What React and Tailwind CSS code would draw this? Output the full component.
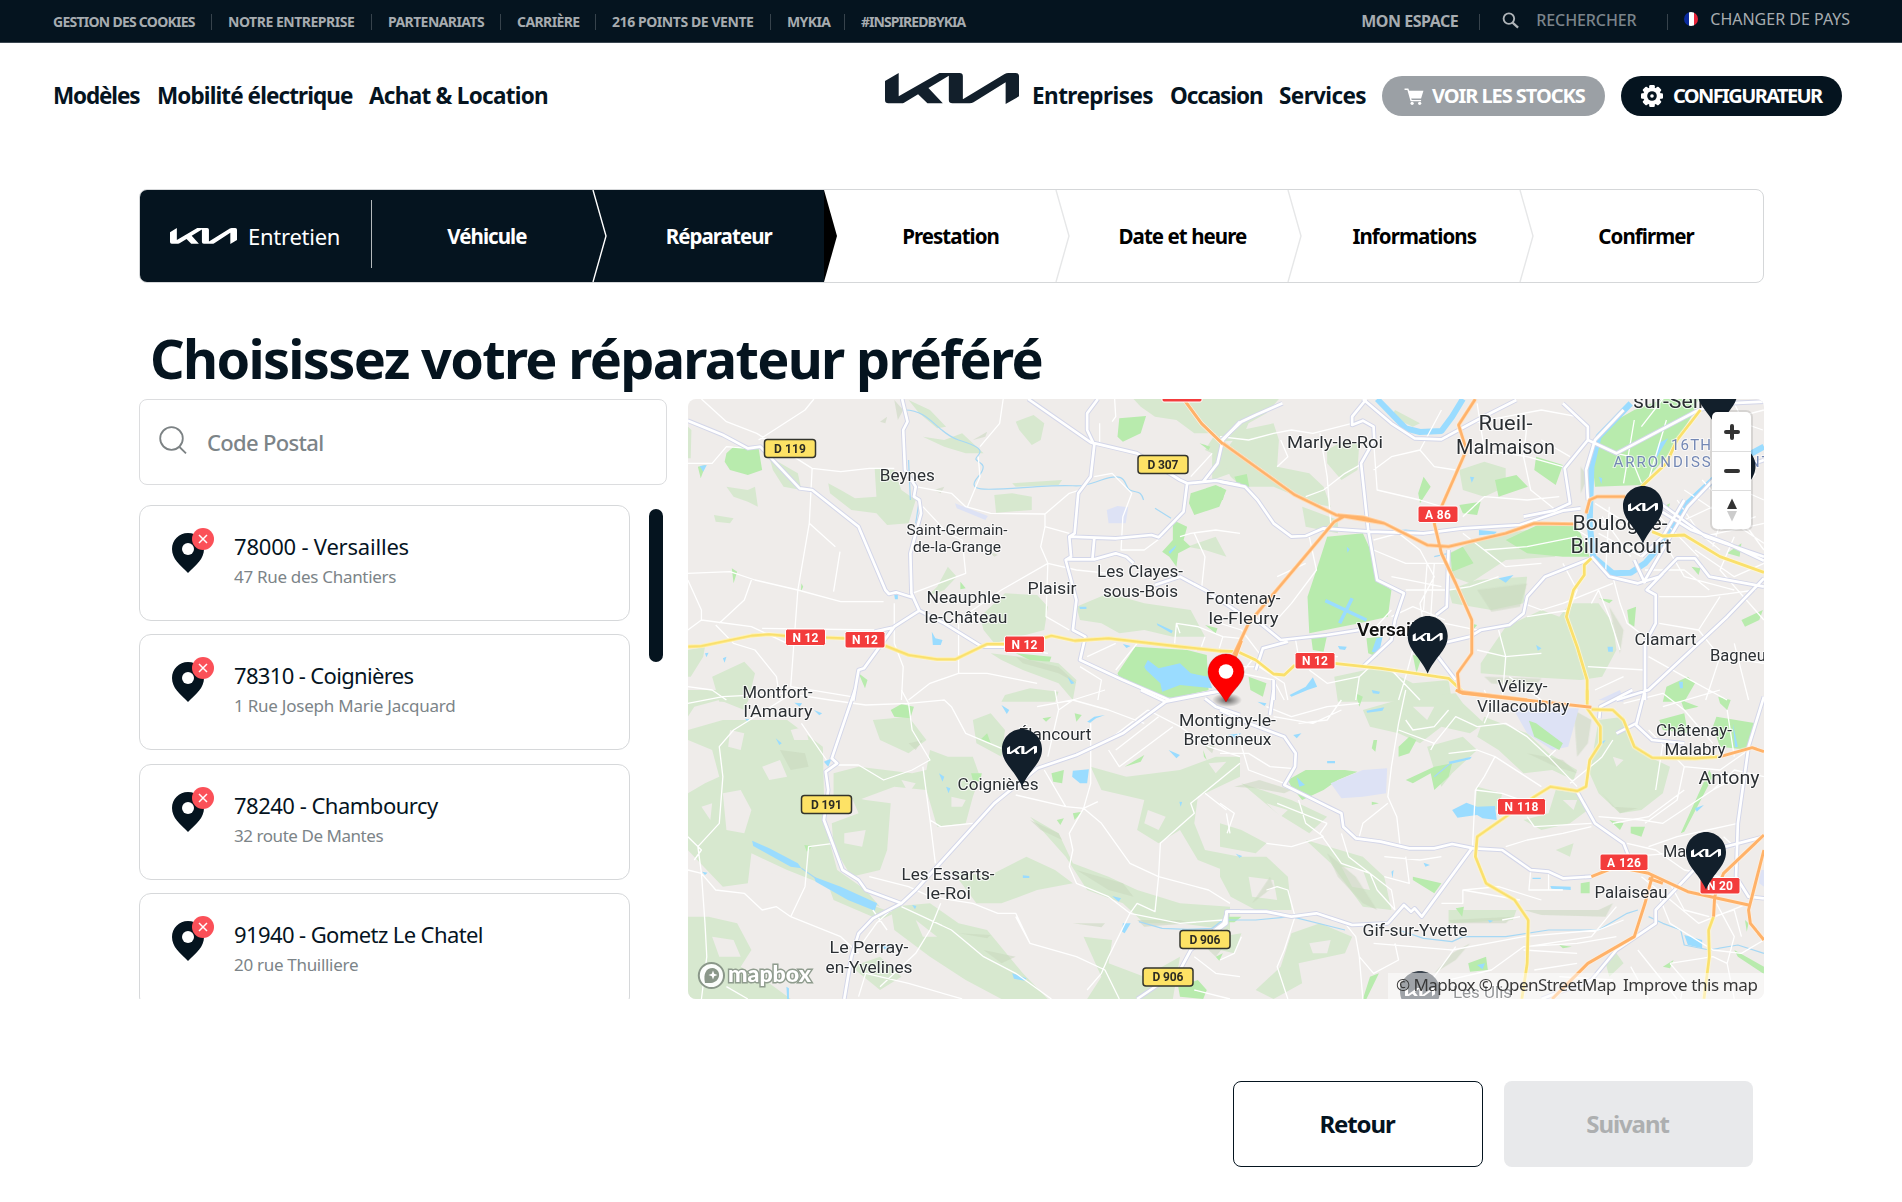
import React from 'react';

const KIA_PATH =
  'M27 57L68 33V103L190 33H250Q260 33 260 43V112L385 36Q390 33 396 33H418Q428 33 428 43V103L388 126V61L292 121Q287 124 280 124H229Q218 124 218 114V41L157 78L200 124H154L126 97L84 122Q81 124 76 124H37Q27 124 27 114Z';

function KiaLogo({ className }) {
  return (
    <svg viewBox="27 33 401 93" preserveAspectRatio="none" className={className} fill="currentColor">
      <path d={KIA_PATH} />
    </svg>
  );
}

const TOP_LINKS = [
  ['GESTION DES COOKIES', 'w-[142px] tracking-[-0.74px]'],
  ['NOTRE ENTREPRISE', 'w-[127px] tracking-[-0.48px]'],
  ['PARTENARIATS', 'w-[96px] tracking-[-0.58px]'],
  ['CARRIÈRE', 'w-[62px] tracking-[-0.6px]'],
  ['216 POINTS DE VENTE', 'w-[142px] tracking-[-0.43px]'],
  ['MYKIA', 'w-[41px] tracking-[-0.6px]'],
  ['#INSPIREDBYKIA', 'w-[104px] tracking-[-0.94px]'],
];

function TopBar() {
  return (
    <div className="flex h-[43px] items-start border-b border-[#3a4650] bg-[#05141f] pl-[53px] pr-[52px] text-[#a7acb0]">
      <div className="flex h-[43px] items-center text-[14px] font-bold">
        {TOP_LINKS.map(([t, c], i) => (
          <React.Fragment key={t}>
            {i > 0 && <span className="mx-4 h-4 w-px bg-[#37434c]" />}
            <span className={`whitespace-nowrap ${c}`}>{t}</span>
          </React.Fragment>
        ))}
      </div>
      <div className="ml-auto flex h-[43px] items-center text-[16px]">
        <span className="-mt-0.5 w-[98px] whitespace-nowrap font-bold tracking-[-0.48px]">MON ESPACE</span>
        <span className="ml-5 mr-[22px] h-4 w-px bg-[#37434c]" />
        <svg viewBox="0 0 18 18" className="-mt-0.5 h-[17px] w-[17px]" fill="none" stroke="#b0b5b9" strokeWidth="2">
          <circle cx="7.3" cy="7" r="5.6" />
          <path d="M11.2 11.2L17 16.6" strokeWidth="2.4" />
        </svg>
        <span className="ml-[17px] -mt-1 w-[102px] whitespace-nowrap font-medium tracking-[-0.1px] text-[#7b848b]">RECHERCHER</span>
        <span className="ml-[29px] mr-4 h-4 w-px bg-[#37434c]" />
        <span className="-mt-1.5 flex h-[14px] w-[14px] overflow-hidden rounded-full">
          <i className="flex-1 bg-[#0a2a9c]" />
          <i className="flex-1 bg-white" />
          <i className="flex-1 bg-[#e8243a]" />
        </span>
        <span className="-mt-1.5 ml-3 whitespace-nowrap">CHANGER DE PAYS</span>
      </div>
    </div>
  );
}

function NavBar() {
  return (
    <nav className="flex h-[106px] items-center whitespace-nowrap pl-[53px] pr-[60px] text-[22.5px] font-bold text-[#05141f]">
      <span className="w-[88px] tracking-[-1.15px]">Modèles</span>
      <span className="ml-4 w-[196px] tracking-[-0.9px]">Mobilité électrique</span>
      <span className="ml-4 w-[180px] tracking-[-0.72px]">Achat &amp; Location</span>
      <KiaLogo className="-mt-4 ml-auto h-[31px] w-[134px] text-[#121f2b]" />
      <span className="ml-[13px] w-[122px] tracking-[-0.55px]">Entreprises</span>
      <span className="ml-4 w-[93px] tracking-[-1.1px]">Occasion</span>
      <span className="ml-4 w-[87px] tracking-[-0.6px]">Services</span>
      <span className="ml-4 flex h-10 w-[223px] items-center rounded-full bg-[#9ba0a5] pl-[22px] text-[20px] font-bold text-white">
        <svg viewBox="0 0 20 18" className="mr-2 h-[17px] w-[20px]" fill="#fff">
          <path d="M0 0.5H4L5 3H20L17.5 11H7L7.6 12.6H17.5V14H6.4L3 2H0Z" />
          <circle cx="8" cy="16.2" r="1.7" />
          <circle cx="16" cy="16.2" r="1.7" />
        </svg>
        <span className="tracking-[-1.05px]">VOIR LES STOCKS</span>
      </span>
      <span className="ml-4 flex h-10 w-[221px] items-center rounded-full bg-[#05141f] pl-[20px] text-[20px] font-bold text-white">
        <svg viewBox="-11 -11 22 22" className="mr-[10px] h-[22px] w-[22px]" fill="#fff">
          {[0, 45, 90, 135].map((a) => (
            <rect key={a} x="-2.8" y="-11" width="5.6" height="22" rx="1.2" transform={`rotate(${a})`} />
          ))}
          <circle r="8.8" />
          <circle r="4.8" fill="#05141f" />
          <circle r="1.8" fill="#fff" />
        </svg>
        <span className="tracking-[-1.6px]">CONFIGURATEUR</span>
      </span>
    </nav>
  );
}

const STEPS = ['Véhicule', 'Réparateur', 'Prestation', 'Date et heure', 'Informations', 'Confirmer'];

function Stepper() {
  return (
    <div className="mt-10 ml-[139px] flex h-[94px] w-[1625px] overflow-hidden rounded-lg border border-[#d5d7d9]">
      <div className="flex w-[232px] items-center bg-[#05141f] pl-[30px] text-white">
        <KiaLogo className="h-4 w-[67px]" />
        <span className="ml-[11px] w-[94px] text-[22px] tracking-[-0.25px]">Entretien</span>
        <span className="-mt-[5px] ml-auto h-[68px] w-px bg-[#b4b9bc]" />
      </div>
      {STEPS.map((s, i) => (
        <div
          key={s}
          className={`relative flex flex-1 items-center justify-center text-[20.5px] font-bold tracking-[-0.95px] ${
            i === 0 ? 'bg-[#05141f] text-white' : i === 1 ? 'text-white' : 'text-black'
          }`}
        >
          {i === 1 && <span className="absolute inset-y-0 left-0 w-[220px] bg-[#05141f]" />}
          <span className="relative pr-0.5">{s}</span>
          {i < 5 && (
            <svg viewBox="0 0 16 92" className="absolute -right-[4px] top-0 z-10 h-[92px] w-4">
              {i === 1 ? (
                <path d="M0 0L13 46L0 92Z" fill="#000" />
              ) : (
                <path d="M1 0L14 46L1 92" fill="none" stroke={i === 0 ? '#fff' : '#e6e7e8'} strokeWidth="1.4" />
              )}
            </svg>
          )}
        </div>
      ))}
    </div>
  );
}

const DEALERS = [
  ['78000 - Versailles', '47 Rue des Chantiers', 'tracking-[-0.2px]', 'tracking-[-0.3px]'],
  ['78310 - Coignières', '1 Rue Joseph Marie Jacquard', 'tracking-[-0.65px]', 'tracking-[-0.23px]'],
  ['78240 - Chambourcy', '32 route De Mantes', 'tracking-[-0.5px]', 'tracking-[-0.45px]'],
  ['91940 - Gometz Le Chatel', '20 rue Thuilliere', 'tracking-[-0.6px]', 'tracking-[-0.3px]'],
];

function DealerCard({ name, street, track, streetTrack }) {
  return (
    <div className="flex h-[116px] w-[491px] shrink-0 rounded-xl border border-[#d6d8da] pl-8">
      <svg viewBox="0 0 44 46" className="mt-[21px] h-[46px] w-11 shrink-0">
        <path d="M16 6C7 6 0 13 0 22C0 32 8 38 16 46C24 38 32 32 32 22C32 13 25 6 16 6Z" fill="#05141f" />
        <circle cx="16" cy="22" r="6" fill="#fff" />
        <circle cx="31" cy="12" r="11" fill="#fb5058" />
        <path d="M27 8L35 16M35 8L27 16" stroke="#fff" strokeWidth="1.5" />
      </svg>
      <div className="ml-[18px] mt-[25px] whitespace-nowrap">
        <div className={`text-[22px] leading-[30px] text-[#05141f] ${track}`}>{name}</div>
        <div className={`mt-1 text-[17px] leading-6 text-[#7c8488] ${streetTrack}`}>{street}</div>
      </div>
    </div>
  );
}

/* The map is drawn in four quarters, each with its own local coordinates. */
const QUARTERS = [
  {
    origin: 'translate(680 390)',
    forest:
      'M1270 27H1568V110L1520 160L1490 190L1470 180L1500 130L1440 130L1390 90L1330 80L1290 50Z M1490 190L1520 150L1568 190V240L1490 270Z M545 235L600 240L620 300L660 330L640 400L580 405L550 370L480 360L420 310L415 280L450 300L490 325L550 320Z M130 290L190 300L210 290L218 350L190 335L150 320Z M250 200L330 250L340 300L290 290L260 240Z M880 315L930 310L985 320V360L885 368Z M940 95L990 75L1020 100L1010 150L985 165L950 120Z M680 140L740 150L790 130L850 190L800 190L740 170Z M640 30L700 60L745 110L720 115L670 70Z M95 375L150 385L140 400L100 395Z M840 680L910 610L1000 615L1030 650L1020 720L880 760L850 720Z M1110 650L1200 610L1300 640L1430 660L1470 740L1380 740L1300 720L1230 730L1180 700L1120 690Z M90 860L180 815L210 850L190 935H110Z M22 780L70 770L65 800L30 860H22Z M870 790L950 800L1060 820L1110 870L1100 930L1060 880L960 840L900 810Z M910 915L980 895L1060 905L1050 935H900Z M22 110L32 120L30 205L22 205Z M930 280L1070 270L1060 285L940 290Z M1420 470L1500 440L1530 500L1470 480Z M720 590L750 530L775 560L740 600L690 620Z',
    shade:
      'M560 95L580 80L575 100Z M600 30L625 60L610 90Z M710 300L740 290L730 310Z M820 150L860 125L855 140Z M860 480L890 495L880 500Z M940 800L1060 830L1110 880L1060 850L960 820Z',
    park: 'M130 190L150 170L220 175L230 240L190 255L140 240L125 215Z M1230 85L1305 78L1290 130L1240 155L1225 140Z M1430 310L1500 285L1530 300L1510 350L1440 375L1425 340Z M1225 850L1275 770L1420 780L1475 795L1480 900L1380 925L1320 910L1230 865Z M1380 390L1420 410L1410 450L1430 470L1395 490L1390 530L1370 500L1350 485L1380 450Z M145 535L160 545L150 580Z M940 790L1040 800L1035 815L980 810Z M50 230L72 225L58 265Z M340 580L338 605L345 590Z M500 850L525 870L518 895Z M785 575L800 595L785 598Z M1470 705L1505 715L1500 730Z M1455 160L1485 170L1480 180Z',
    water:
      'M1300 830L1310 810L1340 835L1400 820L1430 850L1480 860L1490 895L1400 885L1350 905L1345 880L1305 840Z M705 725L715 745L735 750L730 765L708 765Z M600 615H610V628H602Z M1118 650H1138V657H1120Z M55 228L75 225L65 245Z M70 790L80 788L74 802Z M120 805L130 800L125 818Z M1240 762L1262 768L1250 774Z M1368 485L1390 465L1386 475L1372 492Z M1335 700L1380 722L1376 730L1337 706Z M1085 860L1105 880L1095 882Z',
    urban: 'M1195 360L1225 348L1255 352L1248 400L1200 400Z M770 340L862 378L855 390L775 355Z',
    stream:
      'M630 60C700 60 720 130 780 150S850 180 832 200S875 210 835 260S860 300 1000 290S1100 300 1180 270S1240 290 1260 300S1290 300 1298 330 M1330 355L1375 385 M640 210L645 330 M670 330L660 400',
    minor:
      'M60 27L130 95L215 130L370 235L450 245L530 235L600 235 M375 27L350 60L220 150 M370 235L362 400L330 600L310 890 M362 400L435 470 M448 485L430 605 M22 550L140 545L210 570L330 600L450 635L570 635 M905 27L895 100L840 170 M835 200L840 260L805 350 M660 290L760 310L800 350L870 370L1022 372V410L1010 470L1030 520L1110 540L1200 550 M1022 410L1090 430 M1030 520L1025 680L1090 720 M1022 372L1090 310L1120 300 M22 220L90 220L130 170L190 175 M1217 27L1220 80L1210 95 M1175 100V160 M680 350L750 430L790 450L800 550L700 590L650 610 M1160 260L1210 250L1265 310L1240 380L1235 480H1300L1350 440 M1400 440L1430 430L1500 420L1568 430 M60 690L200 710L300 760 M22 570L60 660V690L22 720 M100 705L150 760L210 780L270 860L280 930 M200 570L180 630L110 700 M600 640V760L625 830L620 930 M780 700V850L700 880L640 930 M780 850H860L1000 880 M1030 790L980 780 M310 890L480 920 M1220 840L1280 760 M1120 830L1180 870L1170 930 M1400 730L1390 700L1450 710L1520 740L1568 745 M1440 430L1470 500L1460 600 M1140 800L1220 760 M22 890L90 900L130 930 M230 715L560 720 M1030 520L900 600L780 690 M1430 260L1490 190 M1390 700L1385 760 M1470 740L1460 770 M1520 740L1510 775',
    main: 'M22 92L120 135L190 175L225 170L335 295L370 300L500 410L575 600L585 612L605 607L650 622 M622 27L637 95L625 120L630 240L660 290L655 320L670 330L675 370L645 490L648 610L670 662L600 710L515 835L500 840L485 932 M545 725L600 712 M670 662L740 700L845 770H920 M975 27L1150 157L1280 190L1400 270L1420 280L1500 272L1568 285 M1170 27L1140 70V120L1160 165L1150 260L1115 310L1105 430L1090 440L1095 500L1080 510L1110 630L1100 720L1135 740L1120 810L1240 870L1370 930L1500 905 M1090 440L1220 445L1320 435L1340 442L1410 365L1420 280 M1085 508H1160L1220 490L1250 500L1270 520 M1160 445L1155 505 M1568 95L1520 150L1505 220L1465 275 M1330 585L1400 560L1470 600L1568 670',
    yellow:
      'M22 770L60 768L200 737L250 733L300 738L460 745L570 765L640 795L720 808L770 808L860 762L960 762L1040 737L1105 752L1200 745L1400 770L1514 783',
    orange: 'M1410 27L1460 100L1520 162 M1572 752L1545 830',
  },
  {
    origin: 'translate(1220 390)',
    forest:
      'M0 27H165L130 70L80 100L60 150L0 155Z M0 200L60 120L150 100L165 150L160 230L250 250L290 290L310 350L260 340L150 290L60 290L30 260Z M300 180L350 150L390 160L385 240L340 270L300 220Z M670 240L740 215L800 235V290L740 320L680 300Z M640 600L720 570L860 560L850 640L760 660L650 640Z M730 820L800 710L900 660L950 680L980 640L1060 640L1100 700L1110 780L1070 860L1010 870L850 860L730 850Z M320 860L450 830L540 880L640 870L650 935H330Z M640 490L740 440L860 420L940 500L800 510L700 580L650 560Z M230 350L330 390L330 430L240 410Z M490 60L560 100L540 110L480 80Z',
    shade:
      'M720 600L860 580L840 650L760 665Z M1010 310L1030 260L1010 230Z M740 860L900 865L880 890L760 880Z M1090 650L1130 720L1120 790Z',
    park: 'M300 440L400 430L430 500L440 570L480 600L470 680L390 700L250 730L245 620L270 540Z M1060 150L1110 90L1160 60L1240 27H1340L1320 80L1250 200L1180 285L1050 290L1045 240Z M800 450L900 400L1000 405L1035 500L960 500L860 490Z M885 200L960 225L940 285L880 240Z M555 310L570 260L590 290L560 340Z M770 270L830 255L862 290L780 320Z M670 345L730 335L720 375L680 370Z M40 260L75 252L82 290L50 285Z M645 490L680 470L710 520L650 545Z M1460 690L1520 660L1510 690L1470 710Z M255 740L300 735L290 785L260 780Z M0 290L15 300L8 330L0 330Z M1140 660L1165 650L1160 710L1145 700Z M1250 890L1310 860L1330 880L1300 935H1240Z M1060 625L1100 630L1090 640Z M1240 350L1260 340L1255 360Z M410 745L450 740L440 800L415 790Z M1420 490L1460 460L1455 500Z M80 860L130 880L120 920L85 900Z M540 795L565 800L550 850Z M700 700L720 705L700 730Z M1320 530L1345 535L1340 555Z',
    water:
      'M195 915L240 890L260 862L272 890L245 900L200 920Z M780 565L822 555L800 578Z M725 420L775 425L770 432L725 436Z M438 745L455 742L445 790L425 785Z M425 900L448 905L445 912L428 910Z M1085 770H1100V785H1087Z M700 260L712 262L705 278Z M1220 190L1228 160L1255 145L1235 180L1222 205Z M330 768L355 770L350 780L335 778Z M355 470L363 478L357 488Z M885 765L900 775L890 782Z M1060 260L1070 265L1068 282Z M1285 875H1296V895H1288Z',
    urban: 'M1060 930L1120 900L1130 935Z',
    river: 'M440 27L520 115L560 126L620 123L650 80L680 27 M1150 40L1060 140L1040 230L1035 400L1045 500L1100 550L1150 548L1190 520L1230 470L1290 360L1380 270L1480 195L1523 170',
    stream: 'M410 430L520 420L560 425 M640 490L600 500',
    canal: 'M295 632L410 690 M335 700L370 625',
    minor:
      'M0 140L80 150L150 130L200 120L260 130L370 100 M170 150L190 200L160 230 M280 130L300 260L310 400 M400 220L350 250L290 300L240 320 M620 60L560 180L480 200L430 240 M560 180L600 230L660 240 M430 150L440 300L560 330L620 350 M720 40L740 180 M700 100L800 80L900 60L1000 80 M740 180L860 200L960 230 M860 100L850 200L870 300L940 360 M680 380L740 320L860 330L950 320 M430 450L500 430L560 480L600 560L560 640L570 700 M430 480L520 520L640 520 M480 560L620 590 M520 600H630 M580 520L570 660 M600 520L590 680 M640 600L700 590L780 560 M680 430L740 480L860 470L1000 440 M740 480L800 530L900 520 M630 700L720 720 M250 440L270 540L200 640L150 700 M160 560L240 520 M420 730L480 660 M480 680L540 650L630 690 M210 740L220 800L330 800 M0 700L60 720L110 790 M50 830L110 830L180 880L190 930 M250 840L300 880L390 860L420 830 M390 860L380 930 M540 780L520 860L500 930 M480 840L560 930 M0 870L60 850L150 870L180 930 M60 850L90 810 M900 150L980 200 M1060 400L1200 410 M1060 430L1180 500 M1070 380L1150 500 M1050 340L1140 400 M1090 350L1080 540 M1250 350L1400 480 M1230 380L1340 500 M1280 330L1350 440L1523 400 M1300 300L1523 460 M1400 230L1420 330L1523 480 M1350 270L1480 420 M1420 330L1280 400 M1500 250L1400 400L1380 470 M1460 300L1523 330 M1400 420L1500 380 M1440 440L1400 540L1523 690 M1330 480L1440 560L1523 520 M1240 450L1300 560L1440 600 M1160 90L1130 280 M1110 190L1150 200L1180 280 M1240 27L1180 110 M1250 90L1200 270 M1360 60L1520 120 M1380 100L1523 60 M1440 40L1480 130 M960 520L1000 600L970 680 M1060 600L1090 680L1120 780 M1060 600L1040 640 M1120 640L1140 700L1190 740 M1100 560L1120 640 M1230 620L1360 620L1500 600 M1230 700L1340 720L1400 800L1523 820 M1340 720L1400 620 M1200 800L1300 860L1420 930 M1400 800L1360 930 M1440 760L1480 930 M1030 830L1190 840 M1050 900L1130 860 M860 680L980 660 M780 720L800 800L790 930 M720 780L800 800L900 790 M810 860L900 930 M1190 540L1300 540L1370 600 M1000 420L1030 440 M850 640L900 660L960 640L1100 580',
    main: 'M0 275L70 290L105 330L150 400L200 440L240 438L290 415L420 425L570 430L680 415L840 405L960 362L1010 355 M175 40L100 75L60 95L0 155 M410 27L370 80V105L400 92L430 110L432 150L395 220L415 420L440 570L515 610L490 690L480 750L400 830 M400 27L480 100L545 145L620 148L720 90L830 30 M640 480L635 650L605 675 M90 680L170 750L300 735L390 720 M100 840L120 775L190 755 M960 40L1030 110V150L965 235L980 340L935 362L850 380 M1030 150L1110 190L1340 60L1420 40L1523 35 M1040 505L910 560L860 620L850 670L810 705L730 720L700 740L600 765 M1040 500L1090 560L1170 580L1230 560L1280 505H1330L1370 560L1523 590 M1130 60L1050 150L1025 240L1030 330 M1200 340L1320 420L1420 460L1523 512 M1220 330L1360 440L1523 500 M1190 570L1310 350L1390 260L1523 210 M1523 565L1420 680L1200 900L1110 930 M1240 550L1195 600L1220 615V700L1190 760V930 M610 800L660 870 M150 870V930 M1160 510L1190 580 M1180 500L1240 440L1300 330',
    orange:
      'M8 160L210 315L325 375L460 400L580 465L640 470L800 430L880 400L1000 402 M715 27L668 105L690 180L620 350L600 400L620 490L660 580L705 690V790L665 850L670 905L860 930 M350 378L320 395L80 700L38 795 M1025 370L1035 330L1055 320H1135 M330 375L400 382L460 400',
    yellow:
      'M0 783L50 785L100 810L150 852L180 855L210 825 M320 820L450 835L640 865L680 905 M1345 60L1280 150L1250 220L1180 290 M1210 425L1240 438L1300 435L1400 500L1523 547 M1040 505L1020 525V555L990 600L970 680L1000 770L1028 870V930',
  },
  {
    origin: 'translate(680 690)',
    forest:
      'M120 90L300 90L400 170L405 400L440 540L520 600L560 650L300 540L200 490L190 580L120 590L22 480V310L70 280L110 260L90 180L22 150V120Z M430 470L425 400L500 370L480 320L520 330L590 340L580 480L560 540L480 560Z M430 250L500 230L650 250L690 240L700 180L750 200L820 200L840 260L820 320L800 400L720 410L690 300L600 290L500 330L430 320Z M540 90L640 80L690 150L640 190L560 150Z M820 90L870 70L910 120L900 200L830 160Z M22 680L80 680L160 700L200 780L170 830L250 880L310 927H22Z M590 650L700 640L780 700L860 720L960 850L1030 927H900L800 870L700 800L600 720Z M760 540L860 560L970 500L1050 540L1100 580L1000 600L900 640L830 640Z M980 380L1060 430L1100 520L1200 560L1280 600L1400 640L1540 650V720L1400 700H1300L1240 640L1140 600L1080 500Z M1150 230L1250 260L1400 240L1500 200H1568V260L1450 320L1440 400L1470 480L1568 500V560L1450 510L1400 420L1340 460L1280 420L1300 330L1180 300Z M1130 740L1210 750L1200 820L1300 860L1400 800L1380 927H1140L1180 860Z M22 0H200L180 60L110 30L40 50L22 80Z M420 600L600 670L560 690L430 630Z M480 830L560 800L620 860L560 900Z',
    land: 'M230 230L280 210L300 260L250 270Z M120 310L170 300L200 360L180 430L130 420Z M210 540L340 570L380 620L300 680L200 620Z M310 120L350 110L360 150L320 150Z M140 120L180 130L170 180L135 170Z M460 430L520 420L510 470L460 460Z M90 740L150 750L170 800L110 800Z M760 320L800 330L790 350L760 350Z M620 270L660 280L640 310Z M1310 360L1360 380L1340 420L1300 400Z M1480 220L1530 215L1500 250Z M30 550L90 580L60 640L22 620Z M60 350L90 340L85 390Z M660 690L720 740L680 740Z M1220 770L1260 790L1230 810Z',
    shade:
      'M280 180L350 190L360 230L310 240Z M1110 540L1240 580L1270 620L1200 600Z M780 730L870 735L860 745Z M1280 690L1400 690L1430 700L1300 710Z M850 780L940 800L900 820Z M640 160L680 150L660 180Z M980 390L1060 430L1070 450L1010 420Z M1100 700L1190 700L1180 712Z M1470 170L1500 160L1490 190Z M1480 750L1530 760L1500 800L1480 780Z',
    park: 'M590 60L620 42L655 50L645 85L600 80Z M1290 0H1480L1370 22L1340 22Z M1040 250L1075 240L1070 280L1045 275Z M1245 230L1300 195L1290 215Z M1395 890L1450 870L1475 900L1465 927L1400 920Z M348 465L372 468L355 485Z M815 250L845 250L840 275L820 270Z M840 150L860 130L870 160Z M1100 370L1125 365L1105 390Z M1055 390L1075 385L1065 405Z M1015 85L1040 80L1025 95Z M1105 70L1125 75L1110 95Z M1465 180L1475 210L1467 200Z M1500 800L1520 790L1510 812Z',
    water:
      'M202 452L250 475L330 520L340 535L310 530L205 468Z M375 560L450 590L552 640L545 662L470 630L380 575Z M1100 242L1145 238L1140 280L1120 280L1098 260Z M1368 180L1400 195L1390 205Z M725 250L740 260L735 275Z M745 290L757 295L752 310Z M900 45L922 60L915 72Z M1240 700L1262 700L1245 730L1238 725Z M930 850L970 865L965 872L935 866Z M375 60L398 70L390 76Z M268 145L285 160L278 165Z M403 215L425 205L415 230Z M1210 618L1235 625L1228 635Z M650 645L662 648L658 658Z M62 545L77 548L70 555Z M298 890L305 895V927H300Z M960 556L978 558V564H960Z M320 38L342 40L335 50Z M1140 95L1160 80L1190 75L1165 85L1148 98Z M182 86L194 88L190 96Z M555 770L590 765L580 780Z M1555 490L1568 500V505Z M1398 335L1406 336L1402 350Z',
    urban: '',
    stream: 'M1285 695L1350 715L1420 718L1490 715L1520 690 M340 535L380 565',
    minor:
      'M22 40L120 20L300 10L420 30L520 45L640 40L740 30L760 50 M640 40L650 120L700 210L650 240L570 270L500 225H430 M680 230L700 390L715 520 M700 390L730 410L820 400 M760 50L800 130L900 175 M300 20L240 60L150 120L110 170L120 260L110 400L50 470L60 550L70 700L75 800L60 927 M60 550L100 600L180 610L230 660L270 650L310 680L450 740L500 790 M310 680L350 590L360 470L430 460 M530 560L640 590L700 620L820 640L890 670H940L980 760L1110 800L1190 840L1230 927 M620 650L760 720L850 800L940 850L1040 927 M490 790L550 700L600 650 M540 660L580 720 M730 640L700 720L660 790L560 890 M940 315L1080 350L1130 355L1090 430L1100 480L1090 530L1110 580L1200 620L1260 670L1400 700L1520 690 M1080 350L1020 240 M1170 335L1130 355L1180 400L1260 520L1340 560L1480 600L1540 640 M1340 560L1345 460L1440 370L1430 340L1568 220 M1000 50L1100 30L1200 60L1300 100 M1060 60L1030 200 M1150 100V280L1130 355 M1200 180L1230 230L1380 110 M1260 670L1200 800L1180 850L1140 900 M1260 670L1280 640L1330 665L1340 560 M340 100L410 210 M130 890L190 927 M1190 0L1100 30L1060 60 M1310 60L1200 150 M1340 80L1220 180 M1310 60L1400 110L1480 170L1568 200 M22 440L60 480L40 510 M500 920L520 850L640 880L790 927 M980 760L940 680 M1440 800L1500 850L1568 860 M1440 900L1540 927 M22 540L60 550 M620 0L640 40 M1050 0L1060 60 M1530 370L1540 430 M1470 310L1530 360',
    main: 'M490 0L425 205L440 220L408 245L415 300L403 390L455 540L500 570L520 600L620 640 M1530 0L1480 10L1360 35L1240 130L1110 195L1000 235L880 340L660 600L620 640L540 685L500 730L480 800L460 927 M1290 0L1360 35 M1280 927L1400 840L1430 780L1480 740L1530 700V665H1568 M1470 25L1500 50L1568 75',
    yellow: '',
    orange: '',
  },
  {
    origin: 'translate(1220 690)',
    forest:
      'M400 60L530 20L660 10L680 40L740 100L700 130L620 110L560 160L500 130L420 110Z M740 80L860 130L920 190L1000 240L990 270L930 240L850 250L780 180L720 140Z M1060 90L1130 80L1160 160L1200 200L1260 230L1240 310L1180 360L1120 370L1060 310L1035 250Z M940 300L1010 310L1030 360L980 400L900 420L850 390L920 370Z M720 290L790 310L780 360L715 350Z M60 280L200 330L300 380L250 430L160 370Z M240 450L400 500L460 560L480 660L400 650L310 520Z M0 500L130 500L190 560L200 660H100L30 620L0 560Z M200 730L280 700L370 740L350 790L220 820L230 880L150 927L100 900L170 830Z M1080 820L1110 790L1130 820L1090 860Z M640 660L830 660L820 690L640 700Z M0 740L60 730L40 790L0 780Z M940 480L990 460L980 500Z M0 400L60 420L130 460L100 490L0 470Z M580 170L680 140L720 180L650 250L620 290L600 240Z',
    land: 'M80 560L150 570L160 630L90 620Z M340 530L400 540L420 600L370 590Z M960 330L1000 330L990 360Z M540 50L600 50L580 90Z M130 340L190 360L170 380Z M250 760L310 750L300 790L260 790Z M1100 200L1130 210L1110 230Z',
    shade:
      'M40 290L110 270L200 300L180 310L100 295Z M300 490L380 560L440 660L400 640L330 560Z M850 660L1060 660L1100 640L1080 680L900 675Z M860 190L960 210L1000 250L940 230Z M1070 310L1100 350L1170 355L1120 370Z M650 790L700 760L660 810L600 850Z M90 640L140 560L150 590Z M990 60L1040 90L1030 160L1000 200Z M640 690L820 680L800 700L650 700Z',
    park: 'M190 270L240 240L350 240L385 245L330 270L290 300L230 330L200 290Z M500 170L530 140L550 150L530 190L500 200Z M520 270L600 230L650 220L640 260L600 300L590 250L540 280Z M540 560L620 580L600 610L540 570Z M695 820L745 800L750 840L700 845Z M1390 80L1500 100L1480 180L1400 170L1380 110Z M1150 410L1190 410L1180 440L1150 430Z M1230 90L1300 70L1310 130L1240 120Z M1440 780L1523 830V852L1450 800Z M1370 240L1380 260L1300 425L1290 430Z M1010 580L1035 575V610H1010Z M1395 20L1430 30L1420 60L1400 40Z M1290 30L1340 50L1300 60Z M420 860L445 850L410 927H400Z M430 150L440 150L435 185L425 175Z M20 680L60 680L40 697H22Z M380 10L400 20L390 50Z M660 655L683 650L678 680Z M1470 690L1480 700L1475 725Z M950 765L985 770L960 775Z M1240 830L1270 810L1260 835Z M1090 390L1130 400L1120 420Z M425 335L445 340L425 345Z',
    water:
      'M650 360L690 338L720 350L770 348L775 390L735 385L720 375L665 383Z M1300 735L1350 750L1350 775L1310 765Z M300 213H322V220H300Z M410 62L460 52L455 62L412 68Z M215 262L238 285L222 290Z M45 492L62 498L58 502Z M925 588L982 590V600L928 596Z M875 563H898V567H875Z M640 215L705 200L700 208L645 222Z M480 545L486 540L483 565Z M1436 100L1450 170L1442 172Z M1330 355L1355 345L1335 365Z M720 825L742 820L735 838Z M570 518L588 525L575 530Z M20 135L60 130L40 145Z M105 35L130 40L125 48Z M205 135L228 130L215 145Z M1068 155L1080 150L1072 162Z M750 690L765 692L755 698Z',
    urban:
      'M310 280L400 240L468 235L465 310L400 320L340 325Z M820 55L1005 55L975 170L930 180L860 130Z M1510 540H1523V590L1510 580Z',
    overlay: 'M865 92L885 100L960 160L950 180L880 140Z',
    stream:
      'M20 690L100 690L200 680L350 720 M500 720L570 745L650 755L680 740L800 740L920 720L1060 720L1140 670L1170 660 M1200 680L1240 700L1290 720L1300 765L1370 780L1450 765L1523 790 M600 260L645 220',
    minor:
      'M0 190L80 190L140 230L200 235 M50 130L80 240L180 280 M0 340L40 370L20 430 M340 30L300 90L220 100 M520 0L500 100L480 230L470 320L495 380L505 475 M470 340L400 400L390 440 M130 50L200 80L300 50L390 40 M150 80L260 100L340 60 M500 120L600 160L660 80L720 110L800 100L860 140L920 200L1000 290 M600 160L590 180 M640 190L720 180L770 200L740 260L715 300L707 470 M715 300L790 310L870 340 M770 200L900 290 M800 470L860 450L960 430L1040 410 M860 380L880 410L1040 400 M940 180L920 200 M1060 210L980 280 M1060 380L1180 390L1240 400L1380 300L1450 260 M1100 400L1200 380L1300 300 M1200 120L1300 230L1280 330L1190 400 M1300 230L1400 240L1480 180 M1240 50L1400 0 M1130 40L1240 10L1300 60L1380 160 M1380 300L1440 240L1523 260 M1200 470L1280 440L1450 400 M1140 460L1220 480L1300 540 M1150 500L1260 490 M300 400L280 430L340 520L420 550L440 600L490 660 M130 460L200 470L290 440 M290 440L240 400L220 330 M340 430L360 500L480 600L490 660 M460 500L560 510L620 500 M520 500L530 580L460 560 M620 640H680V600L840 630 M680 600L780 590L900 630 M870 540L865 600L960 600 M920 550V600 M790 690L840 680 M130 600L160 590L190 600L210 680L180 780L160 830L190 927 M60 740L40 790L0 810 M350 700L380 740L390 800L430 850L500 810L490 760 M390 800L400 927 M430 760L650 780L850 740L1060 720L1130 690 M660 770L600 860L590 927 M640 870L760 840L850 770L1000 760L1110 740 M850 780L1000 790 M1110 650L1040 740L860 770 M1180 560L1250 620L1340 700L1480 640 M1260 580L1300 660L1370 680 M1230 620L1260 700L1380 780L1460 790L1523 750 M1380 680L1440 660L1460 740 M1390 640L1440 740L1420 820 M1260 820L1380 800L1420 820L1440 927 M1260 820L1300 870L1290 927 M1170 780L1280 927 M1150 830L1200 927 M880 840L1000 820 M950 860L1100 870 M1410 440L1450 480L1440 600 M1300 540L1400 560 M640 60L600 110L540 120L520 90 M740 0L760 50L740 100 M1100 150L1070 200L1060 210 M160 340L300 400 M1420 60L1440 200 M1240 160L1220 300',
    main: 'M0 60L80 100L180 140L212 190L210 230L180 285L340 370L345 410L380 445L450 455L530 475H600L650 462L710 475L790 480L870 540L920 545L960 565L1040 560 M705 475L565 680L545 655L535 665L515 645L470 700L370 705L270 670L200 680L130 665H20L10 700L-20 725 M1000 305L1050 400L1130 460L1145 500 M1155 0L1065 50L1062 85 M1190 0L1165 105L1210 150L1300 160 M150 0L140 75 M1523 20L1480 170L1450 400L1445 560L1480 620L1523 625 M1523 440L1380 480L1220 660V700L1110 780L1040 870L900 927 M1110 130L1165 100',
    orange:
      'M660 0L680 10L1040 52 M1400 200L1490 173L1523 185 M1040 560L1110 530L1200 550L1310 605L1480 645 M1210 560L1190 640L1160 740L1030 820L930 927 M1523 435L1410 550L1385 620L1382 680 M1523 480L1480 660L1485 700L1523 750 M1200 565L1240 580',
    yellow:
      'M1028 0V55L1065 110V160L1035 210L1025 290L1000 303L925 290L880 320L720 440L715 500L745 580L825 630L863 690L860 820L845 927 M1040 58L1100 60L1130 90L1160 170L1210 203L1330 205L1400 200 M1382 680L1368 720L1370 800L1355 927',
  },
];

const LAYERS = [
  { key: 'forest', fill: '#d7e8cf' },
  { key: 'land', fill: '#efecea' },
  { key: 'shade', fill: '#c9d8be', opacity: 0.55 },
  { key: 'park', fill: '#b8ebad' },
  { key: 'urban', fill: '#dde2f5' },
  { key: 'overlay', fill: '#b8ebad' },
  { key: 'water', fill: '#9adcff' },
  { key: 'stream', stroke: '#a6d8f5', width: 1.2 },
  { key: 'canal', stroke: '#9adcff', width: 3.5 },
  { key: 'river', stroke: '#9adcff', width: 6 },
  { key: 'minor', stroke: '#ffffff', width: 1.3 },
  { key: 'main', stroke: '#d3d6e9', width: 4.6 },
  { key: 'main', stroke: '#ffffff', width: 2.7 },
  { key: 'yellow', stroke: '#fff8d8', width: 4.2 },
  { key: 'yellow', stroke: '#fae06c', width: 2.8 },
  { key: 'orange', stroke: '#fff0e0', width: 4.4 },
  { key: 'orange', stroke: '#ffb269', width: 3 },
];

/* text, centre x, baseline y, size, width */
const LABELS = [
  ['Beynes', 907.3, 480.7, 17, 55],
  ['Saint-Germain-', 957, 535.2, 15, 101],
  ['de-la-Grange', 957, 552, 15, 88],
  ['Neauphle-', 966, 603, 17, 79],
  ['le-Château', 966, 622.5, 17, 83],
  ['Plaisir', 1052, 594, 17, 49],
  ['Les Clayes-', 1140, 577, 17, 86],
  ['sous-Bois', 1140.5, 596.5, 17, 75],
  ['Fontenay-', 1243, 604, 17, 75],
  ['le-Fleury', 1243.5, 623.5, 17, 70],
  ['Marly-le-Roi', 1335, 447.5, 17, 96],
  ['Rueil-', 1505.5, 430, 20.5, 54],
  ['Malmaison', 1505.5, 453.5, 20.5, 99],
  ['sur-Seine', 1677, 408, 20.5, 88],
  ['Boulogne-', 1620, 529.5, 20.5, 95],
  ['Billancourt', 1621, 553, 20.5, 101],
  ['Clamart', 1665.5, 644.5, 17, 62],
  ['Bagneux', 1742, 660.5, 17, 64],
  ['Vélizy-', 1522.5, 692, 17, 50],
  ['Villacoublay', 1523, 711.5, 17, 92],
  ['Châtenay-', 1694, 736, 17, 76],
  ['Malabry', 1695, 755, 17, 61],
  ['Antony', 1729, 784, 19, 61],
  ['Massy', 1687, 857, 17, 48],
  ['Palaiseau', 1631, 898, 17, 73],
  ['Gif-sur-Yvette', 1415, 935.5, 17, 105],
  ['Les Ulis', 1482.5, 998, 17, 59],
  ['Montigny-le-', 1227.5, 725.5, 17, 97],
  ['Bretonneux', 1227.5, 744.5, 17, 88],
  ['Montfort-', 777.5, 697.5, 17, 70],
  ["l'Amaury", 778, 717, 17, 69],
  ['Élancourt', 1055, 740, 17, 73],
  ['Coignières', 998, 790, 17, 81],
  ['Les Essarts-', 948, 879.5, 17, 93],
  ['le-Roi', 948.5, 898.5, 17, 45],
  ['Le Perray-', 869, 953, 17, 79],
  ['en-Yvelines', 869, 972.5, 17, 87],
];

const SHIELDS = [
  ['D 119', 764.5, 439.5, 51],
  ['D 307', 1138, 455.5, 50],
  ['D 191', 801.5, 795.5, 50],
  ['D 906', 1180, 930.5, 50],
  ['D 906', 1143, 968, 50],
  ['N 12', 785.5, 629, 40],
  ['N 12', 845, 631.5, 40],
  ['N 12', 1004.5, 636, 40],
  ['N 12', 1162, 385.5, 40],
  ['A 86', 1418, 506, 40],
  ['N 12', 1295, 652.5, 40],
  ['N 118', 1497.5, 798.5, 48],
  ['A 126', 1600, 854, 48],
  ['N 20', 1700, 877.5, 40],
];

const PINS = [
  [1427.7, 616],
  [1643, 486],
  [1022, 729],
  [1706, 832],
  [1717.5, 372],
  [1735.5, 446],
];

function DealerPin({ x, y, opacity = 1 }) {
  return (
    <g transform={`translate(${x - 20} ${y})`} opacity={opacity}>
      <path d="M20 0C9 0 0 9 0 20C0 34 12 40 20 57.5C28 40 40 34 40 20C40 9 31 0 20 0Z" fill="#121f2b" />
      <g transform="translate(5 17) scale(0.0748 0.088) translate(-27 -33)">
        <path d={KIA_PATH} fill="#fff" />
      </g>
    </g>
  );
}

function MapView() {
  return (
    <div className="relative h-[600px] w-[1076px] overflow-hidden rounded-lg bg-[#efecea]">
      <svg viewBox="688 399 1076 600" className="block h-[600px] w-[1076px] font-['Roboto',sans-serif]">
        <defs>
          <radialGradient id="pinShadow">
            <stop offset="0" stopColor="#000" stopOpacity="0.6" />
            <stop offset="1" stopColor="#000" stopOpacity="0" />
          </radialGradient>
        </defs>
        {LAYERS.map((layer, n) => (
          <g key={n} opacity={layer.opacity}>
            {QUARTERS.map((q) =>
              q[layer.key] ? (
                <g key={q.origin} transform={q.origin}>
                  <g transform="scale(0.35714 0.33333)">
                    <path
                      d={q[layer.key]}
                      fill={layer.fill || 'none'}
                      stroke={layer.stroke || 'none'}
                      strokeWidth={layer.width}
                      strokeLinejoin="round"
                      vectorEffect="non-scaling-stroke"
                    />
                  </g>
                </g>
              ) : null
            )}
          </g>
        ))}
        <g fill="#7387b4" stroke="#fff" strokeOpacity="0.6" strokeWidth="2" paintOrder="stroke" fontSize="15">
          <text x="1671" y="449.5" textLength="40">16TH</text>
          <text x="1613.5" y="466.5" textLength="157">ARRONDISSEMENT</text>
        </g>
        <g fill="#2b2f33" stroke="#fff" strokeOpacity="0.75" strokeWidth="2.2" paintOrder="stroke" strokeLinejoin="round">
          {LABELS.map(([t, x, y, s, w]) => (
            <text key={t} x={x} y={y} fontSize={s} textAnchor="middle" textLength={w} lengthAdjust="spacingAndGlyphs">
              {t}
            </text>
          ))}
          <text x="1357" y="635.5" fontSize="18.5" fontWeight="600" fill="#111" textLength="84" lengthAdjust="spacingAndGlyphs">
            Versailles
          </text>
        </g>
        {SHIELDS.map(([t, x, y, w]) => {
          const d = t[0] === 'D';
          return (
            <g key={t + x}>
              <rect
                x={x}
                y={y}
                width={w}
                height={d ? 18 : 16.5}
                rx={d ? 3 : 2}
                fill={d ? '#fde265' : '#f33c3c'}
                stroke={d ? '#33342c' : '#fff'}
                strokeWidth={d ? 1.5 : 1}
              />
              <text
                x={x + w / 2}
                y={y + (d ? 13.2 : 12.5)}
                fontSize="12"
                fontWeight="700"
                textAnchor="middle"
                textLength={w - (d ? 19 : 14)}
                fill={d ? '#2c2c24' : '#fff'}
              >
                {t}
              </text>
            </g>
          );
        })}
        <ellipse cx="1227" cy="700" rx="15" ry="7" fill="url(#pinShadow)" />
        <path
          d="M1226 654C1216 654 1208 662 1208 672C1208 683 1218 688 1226 702C1234 688 1244 683 1244 672C1244 662 1236 654 1226 654Z"
          fill="#fe0000"
          stroke="#a00"
          strokeOpacity="0.5"
          strokeWidth="0.8"
        />
        <circle cx="1226" cy="671.5" r="7.3" fill="#fff" />
        {PINS.map(([x, y]) => (
          <DealerPin key={x} x={x} y={y} />
        ))}
        <DealerPin x={1420} y={971} opacity={0.8} />
        <circle cx="711.4" cy="975.5" r="12.6" fill="#fff" fillOpacity="0.9" stroke="#8a9789" strokeWidth="2" />
        <path d="M705 983C703 974 706 968 712.5 968C722 969 721 982 711 983Z" fill="#8a9789" />
        <path d="M713 970.5L714.2 973.8L717.5 975L714.2 976.2L713 979.5L711.8 976.2L708.5 975L711.8 973.8Z" fill="#fff" />
        <text
          x="728"
          y="981.5"
          fontSize="22"
          fontWeight="900"
          textLength="83"
          lengthAdjust="spacingAndGlyphs"
          fill="#fff"
          stroke="#8f9c8e"
          strokeWidth="2.8"
          paintOrder="stroke"
          className="font-['Lato',sans-serif]"
        >
          mapbox
        </text>
      </svg>
      <div className="absolute right-[13px] top-[13px] flex w-[39px] flex-col rounded-[5px] bg-white shadow-[0_0_0_2px_rgba(0,0,0,0.1)]">
        <span className="flex h-[39px] items-center justify-center">
          <svg viewBox="0 0 16 16" className="h-4 w-4" stroke="#333" strokeWidth="4" strokeLinecap="round">
            <path d="M2 8H14M8 2V14" />
          </svg>
        </span>
        <span className="flex h-[39px] items-center justify-center border-t border-[#ddd]">
          <svg viewBox="0 0 16 16" className="h-4 w-4" stroke="#333" strokeWidth="4" strokeLinecap="round">
            <path d="M2 8H14" />
          </svg>
        </span>
        <span className="flex h-[39px] items-center justify-center border-t border-[#ddd]">
          <svg viewBox="0 0 12 24" className="h-6 w-3">
            <path d="M6 0.5L11 11H1Z" fill="#333" />
            <path d="M6 23.5L11 13H1Z" fill="#ccc" />
          </svg>
        </span>
      </div>
      <div className="absolute bottom-0 right-0 flex h-[26px] items-center gap-2 whitespace-nowrap bg-white/50 pb-0.5 pl-2 pr-2 text-[17px] text-[#383838]">
        <span className="w-[219px] tracking-[-0.55px]">© Mapbox © OpenStreetMap</span>
        <span className="w-[133px] tracking-[-0.4px]">Improve this map</span>
      </div>
    </div>
  );
}

export default function App() {
  return (
    <div className="h-[1202px] w-[1902px] overflow-hidden bg-white font-['Noto_Sans',sans-serif]">
      <TopBar />
      <NavBar />
      <Stepper />
      <h1 className="ml-[150px] mt-[35px] h-[81px] whitespace-nowrap text-[54px] font-bold leading-[80px] tracking-[-1.68px] text-[#05141f]">
        Choisissez votre réparateur préféré
      </h1>
      <main className="ml-[139px] flex h-[600px] w-[1625px] justify-between">
        <section className="w-[528px]">
          <div className="flex h-[86px] items-center rounded-lg border border-[#dcdddf] pl-[19px]">
            <svg viewBox="0 0 28 28" className="-mt-1 h-7 w-7" fill="none" stroke="#7c8284" strokeWidth="1.8">
              <circle cx="12.5" cy="12.5" r="11.3" />
              <path d="M20.5 21L27 27.3" />
            </svg>
            <span className="ml-[20px] text-[22px] font-medium tracking-[-0.68px] text-[#7c8488]">Code Postal</span>
          </div>
          <div className="mt-[19.5px] flex h-[494.5px] justify-between overflow-hidden">
            <div className="flex flex-col gap-[13.6px]">
              {DEALERS.map(([n, s, t, st]) => (
                <DealerCard key={n} name={n} street={s} track={t} streetTrack={st} />
              ))}
            </div>
            <span className="mr-[4px] mt-1 h-[153px] w-[14px] rounded-full bg-[#05141f]" />
          </div>
        </section>
        <MapView />
      </main>
      <footer className="mt-[82px] flex justify-end gap-[21px] pr-[149px] text-[24px] font-bold tracking-[-1.1px]">
        <button className="h-[86px] w-[250px] rounded-lg border border-[#05141f] bg-white pr-0.5 text-[#05141f]">Retour</button>
        <button className="h-[86px] w-[249px] rounded-lg bg-[#e8e9eb] pr-0.5 text-[#adafb0]">Suivant</button>
      </footer>
    </div>
  );
}
